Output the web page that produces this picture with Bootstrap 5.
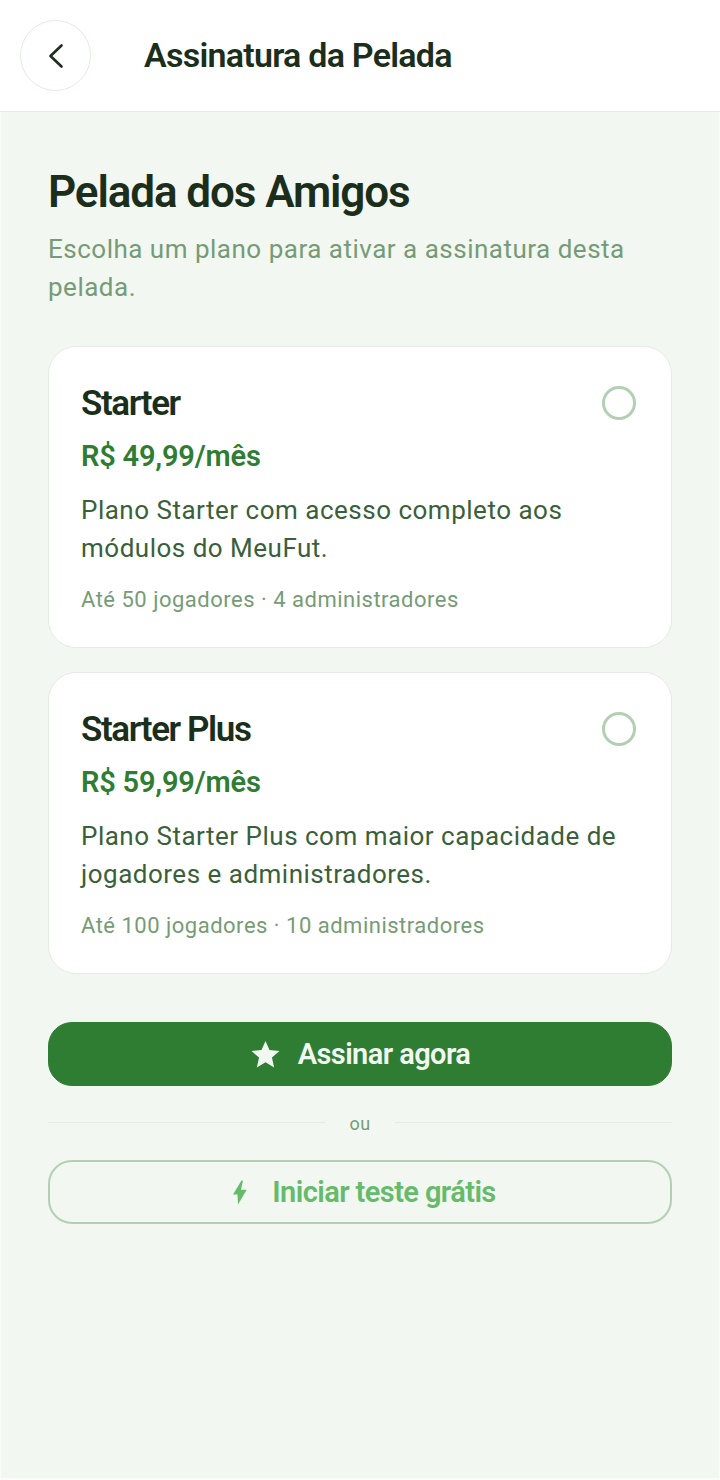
<!DOCTYPE html>
<html lang="pt-BR">
<head>
    <meta charset="UTF-8">
    <meta name="viewport" content="width=device-width, initial-scale=1.0">
    <title>Assinatura da Pelada</title>
    <link href="https://cdn.jsdelivr.net/npm/bootstrap@5.3.3/dist/css/bootstrap.min.css" rel="stylesheet">
    <style>
        html, body { height: 100%; }
        body { font-family: Roboto, "Liberation Sans", sans-serif; background: #f2f7f2; color: #1b2e1b; }
        .top-bar { height: 112px; background: #fff; border-bottom: 1px solid #e3ebe3; padding-left: 20px; }
        .back-btn { width: 71px; height: 71px; border: 1px solid #e3ebe3; border-radius: 50%; background: #fff; padding: 0; }
        .top-title { font-size: 34px; font-weight: 600; letter-spacing: -0.75px; margin: 0 0 2px 53px; color: #1b2e1b; line-height: 1; }
        .page-body { min-height: calc(100% - 112px); padding: 50px 48px 0; box-shadow: inset 1px 0 #fbfdfb, inset -1px 0 #fbfdfb, inset 0 -2px #fbfdfb; }
        .page-name { font-size: 44px; font-weight: 600; letter-spacing: -1.1px; line-height: 60px; margin: 0 0 8px; color: #1b2e1b; }
        .page-sub { font-size: 26px; line-height: 38px; letter-spacing: 0.5px; color: #769b76; margin: 0 0 40px; }
        .plan-card { height: 302px; background: #fff; border: 1px solid #e3ebe3; border-radius: 28px; padding: 32px; margin-bottom: 24px; }
        .plan-name { font-size: 35px; font-weight: 600; letter-spacing: -1.4px; line-height: 50px; margin: 0; color: #1b2e1b; }
        .plan-radio { width: 34px; height: 34px; border: 3px solid #b3cfb3; border-radius: 50%; margin: 7px 3px 0 0; }
        .plan-price { font-size: 29px; font-weight: 600; letter-spacing: -0.2px; line-height: 40px; margin: 7px 0 15px; color: #2e7d32; }
        .plan-desc { font-size: 26px; line-height: 38px; letter-spacing: 0.5px; color: #3a5f3a; margin: 0 0 17px; }
        .plan-meta { font-size: 22px; line-height: 32px; letter-spacing: 0.5px; color: #769b76; margin: 0; }
        .btn-sub, .btn-trial { height: 64px; border-radius: 24px; font-size: 29px; font-weight: 600; letter-spacing: -0.58px; gap: 17px; padding: 8px 12px 6px; }
        .btn-sub svg, .btn-trial svg { margin-bottom: 2px; }
        .btn-sub { background: #2e7d32; border: 1px solid #2e7d32; color: #f1f8f1; margin-top: 48px; }
        .btn-sub:hover { background: #2e7d32; color: #f1f8f1; }
        .or-line { height: 1px; background: #e3ebe3; margin-top: 10px; }
        .or-row { margin: 26px 0 28px; height: 20px; }
        .or-text { font-size: 18px; line-height: 20px; color: #769b76; letter-spacing: 0.5px; padding: 0 24px; margin-top: 2px; }
        .btn-trial { background: transparent; border: 2px solid #b3cfb3; color: #66bb6a; }
        .btn-trial:hover { background: transparent; color: #66bb6a; }
    </style>
</head>
<body>
    <div class="top-bar d-flex align-items-center">
        <button class="back-btn d-flex align-items-center justify-content-center" type="button" aria-label="Voltar">
            <svg width="32" height="32" viewBox="0 0 32 32" fill="none" stroke="#1b2e1b" stroke-width="2.6" stroke-linecap="round" stroke-linejoin="round"><path d="M21.5 5.5 L10.5 16 L21.5 26.5"/></svg>
        </button>
        <h1 class="top-title">Assinatura da Pelada</h1>
    </div>

    <div class="page-body">
        <h2 class="page-name">Pelada dos Amigos</h2>
        <p class="page-sub">Escolha um plano para ativar a assinatura desta pelada.</p>

        <div class="plan-card">
            <div class="d-flex justify-content-between align-items-start">
                <h3 class="plan-name">Starter</h3>
                <div class="plan-radio"></div>
            </div>
            <div class="plan-price">R$ 49,99/mês</div>
            <p class="plan-desc">Plano Starter com acesso completo aos módulos do MeuFut.</p>
            <p class="plan-meta">Até 50 jogadores · 4 administradores</p>
        </div>

        <div class="plan-card">
            <div class="d-flex justify-content-between align-items-start">
                <h3 class="plan-name">Starter Plus</h3>
                <div class="plan-radio"></div>
            </div>
            <div class="plan-price">R$ 59,99/mês</div>
            <p class="plan-desc">Plano Starter Plus com maior capacidade de jogadores e administradores.</p>
            <p class="plan-meta">Até 100 jogadores · 10 administradores</p>
        </div>

        <button class="btn btn-sub w-100 d-flex align-items-center justify-content-center" type="button">
            <svg width="31" height="31" viewBox="0 0 24 24" fill="#f1f8f1"><path d="M12 1.5 L15.1 8.6 L22.8 9.3 L17 14.4 L18.7 22 L12 18 L5.3 22 L7 14.4 L1.2 9.3 L8.9 8.6 Z"/></svg>
            Assinar agora
        </button>

        <div class="or-row d-flex align-items-start">
            <div class="or-line flex-grow-1"></div>
            <span class="or-text">ou</span>
            <div class="or-line flex-grow-1"></div>
        </div>

        <button class="btn btn-trial w-100 d-flex align-items-center justify-content-center" type="button">
            <svg width="31" height="31" viewBox="0 0 31 31" fill="#66bb6a"><path d="M17.5 3.5 L19 3.5 L17 12.8 L22.7 12.8 L14 27.5 L13.5 17.5 L9 17.5 Z"/></svg>
            Iniciar teste grátis
        </button>
    </div>

    <script src="https://cdn.jsdelivr.net/npm/bootstrap@5.3.3/dist/js/bootstrap.bundle.min.js"></script>
</body>
</html>
